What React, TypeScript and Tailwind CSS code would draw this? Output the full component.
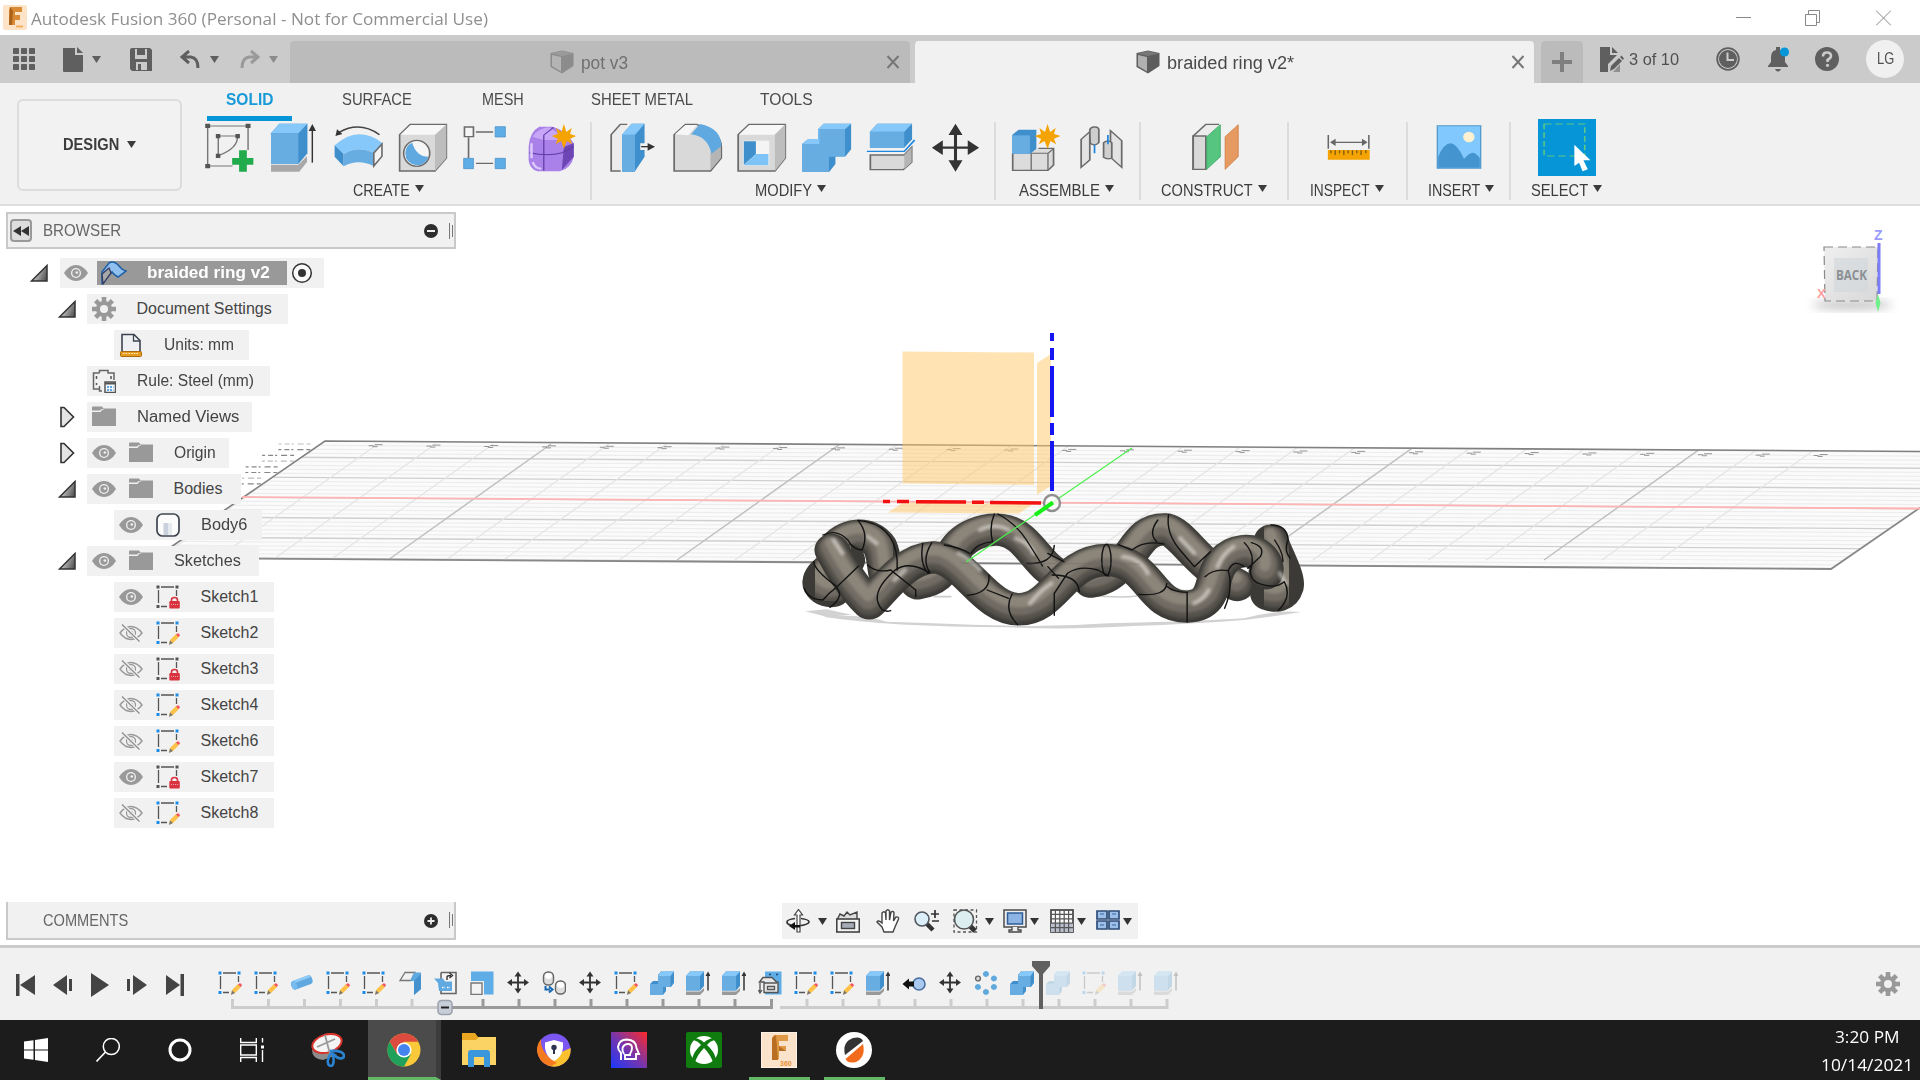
import { useLayoutEffect, useRef, useState, type ReactNode } from "react";

/* Single-line label condensed or expanded to a fixed width. */
function Fit({ w, className = "", children }: { w: number; className?: string; children: ReactNode }) {
  const ref = useRef<HTMLSpanElement>(null);
  const [s, setS] = useState(1);
  useLayoutEffect(() => {
    if (ref.current) setS(w / ref.current.offsetWidth);
  }, [w]);
  return (
    <span className={"block shrink-0 whitespace-nowrap " + className} style={{ width: w }}>
      <span ref={ref} className="inline-block origin-left whitespace-nowrap" style={{ transform: `scaleX(${s})` }}>
        {children}
      </span>
    </span>
  );
}

function Ic({ vb, className, children }: { vb: string; className: string; children: ReactNode }) {
  return (
    <svg viewBox={vb} preserveAspectRatio="none" className={"block shrink-0 " + className} fill="none">
      {children}
    </svg>
  );
}

function Caret({ className = "" }: { className?: string }) {
  return (
    <svg viewBox="0 0 10 8" preserveAspectRatio="none" className={"mr-px block h-[7px] w-[9px] shrink-0 " + className}>
      <path d="M0 0H10L5 8Z" fill="currentColor" />
    </svg>
  );
}

const DK = "#5f5f5f";

/* ---------- title + document tabs ---------- */

function TitleBar() {
  return (
    <div className="flex h-[35px] items-center bg-white font-['Open_Sans',sans-serif] text-[17px] leading-[24px] text-[#8f8f8f]">
      <Ic vb="0 0 24 25" className="ml-[3px] h-[25px] w-6">
        <rect width="24" height="25" rx="2" fill="#fde3c8" />
        <path d="M7 2H19V7H12V10H17V15H12V20H6V5Z" fill="#d98a34" />
        <path d="M7 2L6 20H9L10 6Z" fill="#a8621c" />
        <path d="M13 21.500H20" stroke="#f0b060" strokeWidth="2" />
      </Ic>
      <Fit w={457} className="ml-1 mt-0.5">Autodesk Fusion 360 (Personal - Not for Commercial Use)</Fit>
      <div className="ml-auto flex items-center pr-[29px]">
        <Ic vb="0 0 15 16" className="h-4 w-[15px]">
          <path d="M0 7.500H15" stroke="#888" />
        </Ic>
        <Ic vb="0 0 15 16" className="ml-[54px] h-4 w-[15px]">
          <path d="M0.500 4.500H11.500V15.500H0.500ZM3.500 4V0.500H14.500V12.500H12" stroke="#888" />
        </Ic>
        <Ic vb="0 0 15 16" className="ml-[56px] h-4 w-[15px]">
          <path d="M0 0.500L15 15.500M15 0.500L0 15.500" stroke="#888" />
        </Ic>
      </div>
    </div>
  );
}

function Cube({ a, b, c, className }: { a: string; b: string; c: string; className: string }) {
  return (
    <Ic vb="0 0 24 24" className={"h-6 w-6 " + className}>
      <path d="M0.500 3L12 0.500L23.500 3V16L12 23.500L0.500 17Z" fill={a} />
      <path d="M2 5L11 7V21.500L2 16Z" fill={b} />
      <path d="M1 3.500L12 1L23 3.500L12 6Z" fill={c} />
    </Ic>
  );
}

function CloseX({ className }: { className: string }) {
  return (
    <Ic vb="0 0 14 14" className={"h-3.5 w-3.5 " + className}>
      <path d="M1.500 1L12.500 13M12.500 1L1.500 13" stroke="#777" strokeWidth="2" />
    </Ic>
  );
}

function DocBar() {
  return (
    <div className="flex h-12 bg-[#cbcbcb]">
      <div className="flex h-12 w-[290px] shrink-0 items-center text-[#5f5f5f]">
        <Ic vb="0 0 22 22" className="ml-[13px] h-[22px] w-[22px]">
          {[0, 8, 16].map((x) => [0, 8, 16].map((y) => <rect key={x + "-" + y} x={x} y={y} width="6" height="6" rx="0.800" fill={DK} />))}
        </Ic>
        <Ic vb="0 0 20 25" className="ml-7 h-[25px] w-5">
          <path d="M0 1H12V8H20V24Q20 25 19 25H1Q0 25 0 24Z" fill={DK} />
          <path d="M14 0L20 6H14Z" fill={DK} />
        </Ic>
        <Caret className="ml-[9px]" />
        <Ic vb="0 0 22 23" className="ml-7 h-[23px] w-[22px]">
          <path d="M2 0H20L22 2V23H2L0 21V2Q0 0 2 0Z" fill={DK} />
          <path d="M5 1H17V11H5ZM6 14H17V22H6Z" fill="#cbcbcb" />
          <path d="M7 1H15V7H7ZM8 16H11V22H8Z" fill={DK} />
        </Ic>
        <Ic vb="0 0 20 19" className="ml-7 h-[19px] w-5">
          <path d="M9 1L2 7L9 13M2 7H11Q18 8 18 18" stroke={DK} strokeWidth="3" />
        </Ic>
        <Caret className="ml-[10px]" />
        <Ic vb="0 0 20 19" className="ml-5 h-[19px] w-5">
          <path d="M11 1L18 7L11 13M18 7H9Q2 8 2 18" stroke="#999" strokeWidth="3" />
        </Ic>
        <Caret className="ml-[9px] text-[#8c8c8c]" />
      </div>
      <div className="mt-1.5 flex h-[42px] w-[620px] shrink-0 items-center rounded-t bg-[#bbb] text-[18px] leading-[24px] text-[#707070]">
        <Cube a="#8c8c8c" b="#b4b4b4" c="#9a9a9a" className="ml-[260px]" />
        <Fit w={47} className="ml-[7px] mt-0.5">pot v3</Fit>
        <CloseX className="ml-auto mr-[10px]" />
      </div>
      <div className="ml-[5px] mt-1.5 flex h-[42px] w-[619px] shrink-0 items-center rounded-t bg-[#f1f1f1] text-[18px] leading-[24px] text-[#4a4a4a]">
        <Cube a="#5d5d5d" b="#b0b0b0" c="#777" className="ml-[221px]" />
        <Fit w={127} className="ml-[7px] mt-0.5">braided ring v2*</Fit>
        <CloseX className="ml-auto mr-[9px]" />
      </div>
      <div className="ml-[7px] mt-1.5 flex h-[42px] w-[42px] shrink-0 items-center justify-center rounded-t bg-[#bbb]">
        <Ic vb="0 0 20 20" className="h-5 w-5">
          <path d="M10 0V20M0 10H20" stroke="#7f7f7f" strokeWidth="4" />
        </Ic>
      </div>
      <div className="flex flex-1 items-center">
        <Ic vb="0 0 24 25" className="ml-[17px] h-[25px] w-6">
          <path d="M0 0H10V8H17L8 17V25H0Z" fill={DK} />
          <path d="M12 0L18 6H12Z" fill={DK} />
          <path d="M10 24L11 19L19 11L22 14L14 22Z" fill={DK} />
          <path d="M20 10L21.500 8.500L24 11.500L22.800 13Z" fill={DK} />
          <path d="M15 23L20 17V25H13Z" fill={DK} opacity=".55" />
        </Ic>
        <Fit w={50} className="ml-[5px] mt-0.5 text-[17px] leading-[24px] text-[#505050]">3 of 10</Fit>
        <Ic vb="0 0 24 24" className="ml-[37px] h-6 w-6">
          <circle cx="12" cy="12" r="10.800" stroke={DK} strokeWidth="1.800" />
          <circle cx="12" cy="12" r="9" fill={DK} />
          <path d="M11.500 5.500V13H18" stroke="#cbcbcb" strokeWidth="2" />
        </Ic>
        <Ic vb="0 0 22 26" className="ml-7 h-[26px] w-[22px]">
          <path d="M0 21V20L3 16V11Q3 5 8 4V1H12V4Q17 5 17 11V16L20 20V21Z" fill={DK} />
          <path d="M7 23H13Q12 25.500 10 25.500T7 23Z" fill={DK} />
          <circle cx="16.500" cy="6" r="4.600" fill="#0696d7" />
        </Ic>
        <Ic vb="0 0 24 24" className="ml-[25px] h-6 w-6">
          <circle cx="12" cy="12" r="12" fill={DK} />
          <path d="M8 9.500Q8 5.500 12 5.500T16 9Q16 11 12.500 13V15" stroke="#cbcbcb" strokeWidth="2.600" />
          <circle cx="12.500" cy="18.300" r="1.600" fill="#cbcbcb" />
        </Ic>
        <div className="ml-[27px] flex h-[38px] w-[38px] items-center justify-center rounded-full bg-[#f0f0f0] text-[16px] text-[#505050]">
          <Fit w={17}>LG</Fit>
        </div>
      </div>
    </div>
  );
}

/* ---------- ribbon ---------- */

const S = { stroke: "#6b6b6b", strokeWidth: 4 };

function Group({ pad, label, w, children, className }: { pad: string; label: string; w: number; children: ReactNode; className: string }) {
  return (
    <div className={"flex h-[78px] shrink-0 flex-col border-[#dcdcdc] " + className}>
      <div className="flex h-[59px] pt-px">{children}</div>
      <div className={"flex items-center text-[#3c3c3c] " + pad}>
        <Fit w={w} className="mt-px text-[16.5px] leading-[20px]">{label}</Fit>
        <Caret className="-mt-[3px] ml-[5px]" />
      </div>
    </div>
  );
}

function Star() {
  return <path d="M1380 372L1386 396L1399 384L1395 402L1410 408L1395 416L1400 433L1387 423L1380 446L1373 423L1360 433L1365 416L1350 408L1365 402L1361 384L1374 396Z" fill="#f4a300" />;
}

function Ribbon() {
  return (
    <div className="flex h-[123px] border-b-2 border-[#dedede] bg-[#f1f1f1]">
      <div className="ml-[17px] mt-4 flex h-[92px] w-[165px] shrink-0 items-center rounded-md border-2 border-[#dcdcdc] bg-[#f2f2f2] text-[#3c3c3c]">
        <Fit w={56} className="-mt-px ml-[44px] text-[16.5px] font-bold">DESIGN</Fit>
        <Caret className="-mt-px ml-2" />
      </div>
      <div className="ml-2 flex flex-col">
        <div className="flex h-[39px] text-[16.5px] leading-[33px] text-[#4a4a4a]">
          <div className="ml-[17px] flex h-[38px] w-[85px] justify-center border-b-[5px] border-[#0696d7] font-bold text-[#1899d8]">
            <Fit w={47}>SOLID</Fit>
          </div>
          <Fit w={70} className="ml-[50px]">SURFACE</Fit>
          <Fit w={42} className="ml-[70px]">MESH</Fit>
          <Fit w={102} className="ml-[67px]">SHEET METAL</Fit>
          <Fit w={53} className="ml-[67px]">TOOLS</Fit>
        </div>
        <div className="flex">
          <Group pad="pl-[163px]" label="CREATE" w={57} className="w-[402px] border-r-2">
            <Ic vb="500 369 125 150" className="ml-[14px] h-[50px] w-[51px]">
              <path d="M509 378H608V450M509 378V498H570" stroke="#777" strokeWidth="3.500" />
              <path d="M535 408H582Q584 445 535 467Z" stroke="#777" strokeWidth="3.500" />
              <path d="M503 371h12v13h-12zM602 371h12v13h-12zM503 492h12v13h-12zM529 402h11v13h-11zM577 402h11v13h-11zM529 461h11v13h-11z" fill="#555" />
              <path d="M586 451H605V474H621V494H605V515H586V494H569V474H586Z" fill="#22ab4d" />
            </Ic>
            <Ic vb="660 369 115 150" className="ml-[14px] h-[50px] w-[47px]">
              <path d="M665 494H732L753 468V486L734 515H665Z" fill="#a8a8a8" />
              <path d="M665 400L685 371H754V460L732 492H665Z" fill="#3f8fcd" />
              <path d="M665 400H732V492H665Z" fill="#68ade2" />
              <path d="M665 400L685 371H754L732 400Z" fill="#86c8fa" />
              <path d="M766 488V388" stroke="#333" strokeWidth="3.500" />
              <path d="M766 372L775 393H757Z" fill="#333" />
            </Ic>
            <Ic vb="815 369 125 150" className="ml-[17px] h-[50px] w-[51px]">
              <path d="M830 397Q880 362 929 404" stroke="#444" strokeWidth="4" />
              <path d="M821 408L825 388L838 402Z" fill="#333" />
              <path d="M819 436Q850 403 878 403Q910 403 937 430L914 458Q877 435 841 462Z" fill="#86c8fa" />
              <path d="M819 436L841 462V499L819 470Z" fill="#3f8fcd" />
              <path d="M841 462Q877 435 914 458V498Q877 475 841 499Z" fill="#68ade2" />
              <path d="M915 459L935 432V469L915 498Z" fill="#f4f4f4" {...S} />
            </Ic>
            <Ic vb="975 369 123 150" className="ml-[14px] h-[50px] w-[50px]">
              <path d="M979 404L1005 373H1094V474L1066 513H979Z" fill="#d9d9d9" {...S} />
              <path d="M1066 404L1094 373V474L1066 513Z" fill="#bdbdbd" />
              <path d="M981 404L1006 375H1092L1066 404Z" fill="#f7f7f7" />
              <ellipse cx="1021" cy="460" rx="32" ry="39" fill="#f5f5f5" {...S} />
              <path d="M1010 428Q1020 470 1050 470Q1042 496 1021 496Q993 490 993 458Q994 435 1010 428Z" fill="#5fa9e0" />
            </Ic>
            <Ic vb="1132 369 110 150" className="ml-[14px] h-[50px] w-[45px]">
              <path d="M1148 412V474M1166 396H1208M1166 490H1208" {...S} />
              <path d="M1138 381h22v29h-22z" fill="#f5f5f5" {...S} />
              <path d="M1213 380h25v31h-25zM1136 475h24v31h-24zM1213 475h25v31h-25z" fill="#5fade6" stroke="#4a90c8" strokeWidth="2" />
            </Ic>
            <Ic vb="1290 369 122 150" className="ml-5 h-[50px] w-[50px]">
              <path d="M1294 440Q1296 395 1320 380H1352Q1385 390 1404 430V470Q1398 505 1370 514H1316Q1296 508 1294 480Z" fill="#a981e8" />
              <path d="M1303 410Q1320 383 1345 382L1372 405L1376 420H1330Z" fill="#c7a6f8" />
              <path d="M1380 440L1404 430V470L1375 510Z" fill="#6d45b4" />
              <path d="M1296 458Q1340 470 1376 458L1404 440M1331 405V512M1331 405L1355 382" stroke="#5f3aa6" strokeWidth="3" />
              <path d="M1301 430V475M1304 486Q1308 505 1325 506" stroke="#dccbf9" strokeWidth="6" />
              <Star />
            </Ic>
          </Group>
          <Group pad="pl-[163px]" label="MODIFY" w={57} className="w-[404px] border-r-2">
            <Ic vb="66 369 106 150" className="ml-[17px] h-[50px] w-[46px]">
              <path d="M93 513H71V404L92 373H108" fill="#ececec" {...S} />
              <path d="M96 404L118 371H148V470L125 515H96Z" fill="#3f8fcd" />
              <path d="M96 404H126V515H96Z" fill="#68ade2" />
              <path d="M96 404L118 371H148L126 404Z" fill="#86c8fa" />
              <path d="M138 430L155 430V422L175 440L155 458V450H138Z" fill="#f1f1f1" />
              <path d="M140 440H162" stroke="#333" strokeWidth="4" />
              <path d="M172 440L155 429V452Z" fill="#333" />
            </Ic>
            <Ic vb="212 369 118 150" className="ml-[17px] h-[50px] w-[51px]">
              <path d="M217 404L243 373H268Q326 395 326 440V474L301 513H217Z" fill="#d9d9d9" {...S} />
              <path d="M301 460L325 436V474L301 511Z" fill="#b5b5b5" />
              <path d="M219 403L243 375H270L250 406Z" fill="#f7f7f7" />
              <path d="M256 403L277 372Q326 385 326 438L303 462Q296 410 256 403Z" fill="#5fa9e0" />
            </Ic>
            <Ic vb="360 369 118 150" className="ml-[13px] h-[50px] w-[51px]">
              <path d="M365 404L390 373H474V474L450 513H365Z" fill="#d9d9d9" {...S} />
              <path d="M450 404L474 373V474L450 513Z" fill="#bdbdbd" />
              <path d="M367 404L391 375H472L449 404Z" fill="#f7f7f7" />
              <path d="M376 422H437V497H376Z" fill="#f4f4f4" />
              <path d="M378 424H406V462L378 495Z" fill="#3f8fcd" />
              <path d="M406 462H435V496H378Z" fill="#7ec3f6" />
            </Ic>
            <Ic vb="510 369 117 150" className="ml-[14px] h-[50px] w-[51px]">
              <path d="M513 431L527 417H549V388L562 371H625V448L612 469H589V492L575 515H513Z" fill="#3f8fcd" />
              <path d="M513 433H550V388H611V470H574V515H513Z" fill="#68ade2" />
              <path d="M513 433L527 417H550V388L562 371H625L611 388H552V433Z" fill="#86c8fa" />
            </Ic>
            <Ic vb="660 369 115 150" className="ml-[14px] h-[50px] w-[50px]">
              <path d="M669 395L686 371H766V418L748 443H669Z" fill="#3f8fcd" />
              <path d="M669 395H748V443H669Z" fill="#68ade2" />
              <path d="M669 395L686 371H766L748 395Z" fill="#86c8fa" />
              <path d="M662 454H748L772 420" stroke="#1e86e0" strokeWidth="4" />
              <path d="M670 465H748L765 442V487L746 509H670Z" fill="#d9d9d9" {...S} />
              <path d="M748 465L765 442V487L748 507Z" fill="#b5b5b5" />
            </Ic>
            <Ic vb="810 369 112 150" className="ml-[15px] h-[50px] w-[49px]">
              <path d="M866 390V495M830 443H902" stroke="#333" strokeWidth="7" />
              <path d="M866 371L882 405H850ZM866 515L882 481H850ZM812 443L837 421V465ZM920 443L894 421V465Z" fill="#333" />
            </Ic>
          </Group>
          <Group pad="pl-[23px]" label="ASSEMBLE" w={81} className="w-[145px] border-r-2">
            <Ic vb="994 369 114 150" className="ml-[15px] h-[50px] w-[49px]">
              <path d="M998 460V511H1080L1093 495V445H1058" fill="#dcdcdc" {...S} />
              <path d="M1041 460V511M1041 460H1080V510M1080 460L1093 446" stroke="#6b6b6b" strokeWidth="3" />
              <path d="M997 404L1012 389H1053V446L1039 461H997Z" fill="#3f8fcd" />
              <path d="M997 406H1038V461H997Z" fill="#68ade2" />
              <g transform="translate(-301 0)"><Star /></g>
            </Ic>
            <Ic vb="1150 369 102 150" className="ml-[19px] h-[50px] w-[44px]">
              <path d="M1155 418L1175 395V480L1155 502Z" fill="#e3e3e3" {...S} />
              <path d="M1175 390Q1177 380 1187 381T1196 390V428Q1186 440 1176 430Z" fill="#cfcfcf" {...S} />
              <path d="M1223 392L1249 422V502L1223 472Z" fill="#e3e3e3" {...S} />
              <path d="M1207 428Q1217 418 1226 428V474Q1216 480 1207 472Z" fill="#cfcfcf" {...S} />
              <path d="M1186 434V460M1217 405V433" stroke="#1e86e0" strokeWidth="4" />
            </Ic>
          </Group>
          <Group pad="pl-[20px]" label="CONSTRUCT" w={92} className="w-[148px] border-r-2">
            <Ic vb="1408 369 112 150" className="ml-[50px] h-[50px] w-[49px]">
              <path d="M1442 508H1413V408L1442 373H1472" fill="#ececec" {...S} />
              <path d="M1413 408H1442V508H1413Z" fill="#d9d9d9" {...S} />
              <path d="M1444 410L1475 374V470L1444 508Z" fill="#55c57f" stroke="#35a562" strokeWidth="2" />
              <path d="M1486 410L1516 374V470L1486 508Z" fill="#e69a62" stroke="#cf7c40" strokeWidth="2" />
            </Ic>
          </Group>
          <Group pad="pl-[21px]" label="INSPECT" w={60} className="w-[119px] border-r-2">
            <Ic vb="200 369 102 150" className="ml-[38px] h-[50px] w-[44px]">
              <path d="M203 405V446M297 405V446M210 427H290" stroke="#666" strokeWidth="3.500" />
              <path d="M207 427L220 416V438ZM294 427L281 416V438Z" fill="#666" />
              <path d="M202 450H299V479H202Z" fill="#f4a300" />
              <path d="M209 451V460M219 451V465M229 451V460M239 451V465M249 451V460M259 451V465M269 451V460M279 451V465M290 451V460" stroke="#7d5a10" strokeWidth="3" />
            </Ic>
          </Group>
          <Group pad="pl-[20px]" label="INSERT" w={52} className="w-[103px] border-r-2">
            <Ic vb="452 369 105 150" className="ml-7 h-[50px] w-[46px]">
              <path d="M455 377H554V505H455Z" fill="#80c8fd" stroke="#5599cc" strokeWidth="3" />
              <ellipse cx="527" cy="411" rx="13" ry="16" fill="#fdf1d2" />
              <path d="M457 470Q470 430 486 430Q500 432 516 476Q528 458 536 458Q545 460 552 474V503H457Z" fill="#4394cf" />
            </Ic>
          </Group>
          <Group pad="pl-[20px]" label="SELECT" w={57} className="w-[100px]">
            <Ic vb="688 357 134 171" className="-mt-1 ml-[27px] h-[57px] w-[58px]">
              <path d="M688 357H822V528H688Z" fill="#0696d7" />
              <path d="M702 372H796V468H702Z" stroke="#5fc882" strokeWidth="3.500" strokeDasharray="17 9" />
              <path d="M772 434L809 481H793L803 508L791 514L783 488L772 498Z" fill="#fff" />
            </Ic>
          </Group>
        </div>
      </div>
    </div>
  );
}

/* ---------- small icons shared by tree and timeline ---------- */

type Kind =
  | "sketch" | "locked" | "cyl" | "flange" | "insert" | "scale" | "move" | "joint" | "combine"
  | "extrude" | "derive" | "press" | "pattern" | "folder" | "gear" | "units" | "rule" | "body";

function Small({ kind, faded = false, className = "" }: { kind: Kind; faded?: boolean; className?: string }) {
  return (
    <svg viewBox="0 0 24 24" fill="none" className={"block h-6 w-6 shrink-0 " + (faded ? "opacity-25 " : "") + className}>
      {(kind === "sketch" || kind === "locked") && (
        <>
          <path d="M5 2H18M2.500 5V18M20.500 5V11M5 21.500H11" stroke="#555" strokeWidth="1.300" />
          <path d="M0.500 0.500h3v3h-3zM19.500 0.500h3v3h-3zM0.500 20h3v3h-3z" fill={kind === "sketch" ? "#1d8be8" : "#555"} />
        </>
      )}
      {kind === "sketch" && (
        <>
          <path d="M14 19L20 13L23 16L17 22L13 23.500Z" fill="#fcc24a" />
          <path d="M14 19.500L17 22L13 24Z" fill="#777" />
          <path d="M20 13.500L21.500 12.200Q23.500 12.200 24 14.500L22.500 16Z" fill="#f4525c" />
        </>
      )}
      {kind === "locked" && (
        <>
          <path d="M15.500 17V15Q15.500 12.500 18.500 12.500T21.500 15V17" stroke="#d8333f" strokeWidth="1.600" />
          <rect x="13.300" y="16" width="10.500" height="7.600" rx="1" fill="#d8333f" />
          <path d="M15 19.500H22" stroke="#f3a1a6" strokeWidth="1.200" strokeDasharray="1 1" />
        </>
      )}
      {kind === "cyl" && (
        <g transform="rotate(-20 12 12)">
          <path d="M4 7H20Q23 7 23 11.500T20 16H4Q1 16 1 11.500T4 7Z" fill="#5fa9e0" />
          <path d="M4 7H20Q22 7 22.500 9.500H3Z" fill="#8fcbf7" />
          <ellipse cx="4" cy="11.500" rx="2.600" ry="4.500" fill="#78bbee" />
        </g>
      )}
      {kind === "flange" && (
        <>
          <path d="M7 1.500H17L13 9.500H2Z" fill="#f1f1f1" stroke="#777" strokeWidth="1.300" />
          <path d="M16 1.500H23V18L16 24V10H12Z" fill="#5fa9e0" />
          <path d="M16 10L23 3V18L16 24Z" fill="#4391cf" />
        </>
      )}
      {kind === "insert" && (
        <>
          <path d="M7 1.500H22V22.500H7V1.500" fill="#f4f4f4" stroke="#666" strokeWidth="1.600" />
          <path d="M0 7.500H9L11 10.500H18V20H5L4 12Z" fill="#5fa9e0" />
          <path d="M8 16.500H11M13 16.500H16" stroke="#fff" strokeWidth="1.500" strokeDasharray="1.500 1" />
          <path d="M13 9V6Q13 4.500 17 4.500M15.500 2L18.500 4.500L15.500 7" stroke="#333" strokeWidth="1.400" />
        </>
      )}
      {kind === "scale" && (
        <>
          <path d="M1 0.500H23.500V23.500H14V10H1Z" fill="#5fade6" />
          <path d="M1 12H12V23.500H1Z" fill="#f4f4f4" stroke="#777" strokeWidth="1.400" />
        </>
      )}
      {kind === "move" && (
        <>
          <path d="M12 4V19M4 11.500H20" stroke="#333" strokeWidth="1.800" />
          <path d="M12 0.500L15.500 5.500H8.500ZM12 22.500L15.500 17.500H8.500ZM1 11.500L6 8V15ZM23 11.500L18 8V15Z" fill="#333" />
        </>
      )}
      {kind === "joint" && (
        <>
          <rect x="1.500" y="1" width="10" height="13" rx="4.500" fill="#ddd" stroke="#666" strokeWidth="1.400" />
          <rect x="13.500" y="10" width="10" height="13" rx="4.500" fill="#ddd" stroke="#666" strokeWidth="1.400" />
          <ellipse cx="6.500" cy="5" rx="3.500" ry="3" fill="#fff" />
          <ellipse cx="18.500" cy="14" rx="3.500" ry="3" fill="#fff" />
          <path d="M3.500 15V18.500H8M7 15.500L10.500 18.500L7 21.500" stroke="#1468b3" strokeWidth="2" />
        </>
      )}
      {kind === "combine" && (
        <>
          <path d="M0 13L3 10H8V4L11 0.500H24V12L21 16H16V20L13 24H0Z" fill="#3f8fcd" />
          <path d="M0 13H8V5H20.500V16H13V24H0Z" fill="#68ade2" />
          <path d="M8 5L11 0.500H24L20.500 5Z" fill="#86c8fa" />
        </>
      )}
      {kind === "extrude" && (
        <>
          <path d="M0 20.500H14L18 17V20L14 24H0Z" fill="#999" />
          <path d="M0 5L4 0.500H18V15L14 19.500H0Z" fill="#3f8fcd" />
          <path d="M0 5H14V19.500H0Z" fill="#68ade2" />
          <path d="M0 5L4 0.500H18L14 5Z" fill="#86c8fa" />
          <path d="M22 19.500V3" stroke="#333" strokeWidth="1.500" />
          <path d="M22 0.500L24.500 5H19.500Z" fill="#333" />
        </>
      )}
      {kind === "derive" && (
        <>
          <path d="M7 0.500H23.500V23.500H7Z" fill="#5fade6" />
          <path d="M1.500 11L5 6.500H14L18.500 11H20V21.500H6V11Z" fill="#e8e8e8" stroke="#555" strokeWidth="1.400" />
          <path d="M6 12H19M9.500 15.500H16.500V18.500H9.500ZM2 12V21M0.500 19L2 22L4 19" stroke="#555" strokeWidth="1.300" />
          <path d="M11 3.500H13M18 3.500H20" stroke="#246" strokeWidth="1.300" />
        </>
      )}
      {kind === "press" && (
        <>
          <circle cx="17" cy="13" r="6" fill="#a9c9f0" stroke="#4b6f9e" strokeWidth="1.600" />
          <path d="M0.500 13L7 7.500V10.500H12V15.500H7V18.500Z" fill="#111" />
        </>
      )}
      {kind === "pattern" && (
        <>
          <path d="M12 0a3 3 0 1 1-.1 0zM20 4.500a3 3 0 1 1-.1 0zM20 13a3 3 0 1 1-.1 0zM12 18a3 3 0 1 1-.1 0zM4 13a3 3 0 1 1-.1 0z" fill="#5fa9dc" />
          <circle cx="4" cy="7.500" r="2.400" fill="#ddd" stroke="#666" strokeWidth="1.400" />
        </>
      )}
      {kind === "folder" && <path d="M0 2.500Q0 1.500 1 1.500H10L12 4H9.500L8 5.500H0ZM0 7H8.500L10.500 4.500H12V3.500H24V21H0Z" fill="#999" />}
      {kind === "gear" && (
        <>
          <g stroke="#999" strokeWidth="4.600">
            <path d="M12 0V24M0 12H24M3.600 3.600L20.400 20.400M20.400 3.600L3.600 20.400" />
          </g>
          <circle cx="12" cy="12" r="8" fill="#999" />
          <circle cx="12" cy="12" r="4" fill="#f1f1f1" />
        </>
      )}
      {kind === "units" && (
        <>
          <path d="M3 19V1.500H15L21 7.500V19Z" fill="#eef0f3" stroke="#3c4350" strokeWidth="1.600" />
          <path d="M14.500 1.500V8H21" stroke="#3c4350" strokeWidth="1.300" />
          <rect x="1.500" y="18.500" width="21" height="5" rx="1" fill="#e89a1c" stroke="#a96a12" />
          <path d="M4 20.500H20" stroke="#fff3d0" strokeDasharray="1.500 1.200" />
        </>
      )}
      {kind === "rule" && (
        <>
          <path d="M7.500 4H1.500V20H7.500M7.500 4V1.500H16V4H22V11M7.500 17V22H10" stroke="#666" strokeWidth="1.500" />
          <path d="M4.500 7V10M4.500 14V16M19 7V10" stroke="#555" strokeWidth="1.500" />
          <rect x="13" y="13" width="10.500" height="10.500" fill="#f8f8f8" stroke="#555" strokeWidth="1.500" />
          <path d="M13 14.500H23" stroke="#555" strokeWidth="2" />
          <path d="M15 18H21.500M15 21H21.500" stroke="#2b8be0" strokeWidth="1.400" strokeDasharray="2 1" />
        </>
      )}
      {kind === "body" && (
        <>
          <rect x="1" y="1" width="22" height="22" rx="5.500" fill="#fcfcfc" stroke="#3f4650" strokeWidth="1.700" />
          <path d="M7.500 10H12.500V22H7.500Z" fill="#c9d2dc" />
          <path d="M12.500 10H16V22H12.500Z" fill="#e6eaef" />
        </>
      )}
    </svg>
  );
}

function Eye({ off = false, className = "" }: { off?: boolean; className?: string }) {
  return (
    <svg viewBox="0 0 24 18" fill="none" className={"block h-[18px] w-6 shrink-0 " + className}>
      {off ? (
        <>
          <path d="M1 9Q6 2.500 12 2.500T23 9Q18 15.500 12 15.500T1 9Z" stroke="#999" strokeWidth="1.400" />
          <circle cx="12" cy="9" r="4.500" stroke="#999" strokeWidth="1.300" />
          <circle cx="12" cy="9" r="1.800" stroke="#999" />
          <path d="M3.500 0.500L20.500 17.500" stroke="#f1f1f1" strokeWidth="3.500" />
          <path d="M3 0.500L20.500 17.500" stroke="#888" strokeWidth="1.100" />
        </>
      ) : (
        <>
          <path d="M0 9Q5 1 12 1T24 9Q19 17 12 17T0 9Z" fill="#999" />
          <circle cx="12" cy="9" r="5" fill="#f1f1f1" />
          <circle cx="12" cy="9" r="3.700" fill="#999" />
          <circle cx="12.800" cy="8.500" r="1.300" fill="#f1f1f1" />
        </>
      )}
    </svg>
  );
}

function Twisty({ open }: { open: boolean }) {
  return open ? (
    <svg viewBox="0 0 18 18" className="block h-[18px] w-[18px] shrink-0">
      <defs>
        <linearGradient id="tw" x1="0" y1="0.300" x2="1" y2="0.700">
          <stop offset="0" stopColor="#eee" />
          <stop offset="1" stopColor="#555" />
        </linearGradient>
      </defs>
      <path d="M1.500 17L17 1.500V17Z" fill="url(#tw)" stroke="#333" strokeWidth="1.500" />
    </svg>
  ) : (
    <svg viewBox="0 0 18 22" className="block h-[22px] w-[18px] shrink-0">
      <path d="M3 1.500H6L15.500 11L6 20.500H3Z" fill="#e4e4e4" stroke="#333" strokeWidth="1.600" />
    </svg>
  );
}

/* ---------- browser tree ---------- */

type Row = { lvl: 1 | 2; open?: boolean; eye?: "on" | "off"; kind: Kind; label: string; w: number; box: string };

const ROWS: Row[] = [
  { lvl: 1, open: true, kind: "gear", label: "Document Settings", w: 135, box: "w-[201px]" },
  { lvl: 2, kind: "units", label: "Units: mm", w: 70, box: "w-[135px]" },
  { lvl: 1, kind: "rule", label: "Rule: Steel (mm)", w: 117, box: "w-[183px]" },
  { lvl: 1, open: false, kind: "folder", label: "Named Views", w: 102, box: "w-[165px]" },
  { lvl: 1, open: false, eye: "on", kind: "folder", label: "Origin", w: 42, box: "w-[142px]" },
  { lvl: 1, open: true, eye: "on", kind: "folder", label: "Bodies", w: 49, box: "w-[154px]" },
  { lvl: 2, eye: "on", kind: "body", label: "Body6", w: 46, box: "w-[148px]" },
  { lvl: 1, open: true, eye: "on", kind: "folder", label: "Sketches", w: 67, box: "w-[172px]" },
  { lvl: 2, eye: "on", kind: "locked", label: "Sketch1", w: 58, box: "w-[160px]" },
  { lvl: 2, eye: "off", kind: "sketch", label: "Sketch2", w: 58, box: "w-[160px]" },
  { lvl: 2, eye: "off", kind: "locked", label: "Sketch3", w: 58, box: "w-[160px]" },
  { lvl: 2, eye: "off", kind: "sketch", label: "Sketch4", w: 58, box: "w-[160px]" },
  { lvl: 2, eye: "off", kind: "sketch", label: "Sketch6", w: 58, box: "w-[160px]" },
  { lvl: 2, eye: "on", kind: "locked", label: "Sketch7", w: 58, box: "w-[160px]" },
  { lvl: 2, eye: "off", kind: "sketch", label: "Sketch8", w: 58, box: "w-[160px]" },
];

function Grip() {
  return (
    <div className="ml-[10px] flex gap-[2px]">
      <div className="h-4 w-px bg-[#777]" />
      <div className="mt-0.5 h-3 w-px bg-[#777]" />
    </div>
  );
}

function Browser() {
  return (
    <div>
      <div className="ml-1.5 mt-1.5 flex h-[37px] w-[450px] items-center border-2 border-[#c9c9c9] bg-[#f1f1f1]">
        <div className="ml-[2px] flex h-[23px] w-[22px] items-center justify-center rounded-sm border-2 border-[#999] bg-[#dedede]">
          <svg viewBox="0 0 16 10" className="h-2.5 w-4 shrink-0"><path d="M8 0V10L0 5ZM16 0V10L8 5Z" fill="#333" /></svg>
        </div>
        <Fit w={78} className="-mt-0.5 ml-[11px] text-[16.5px] leading-[24px] text-[#666]">BROWSER</Fit>
        <svg viewBox="0 0 14 14" className="ml-auto h-3.5 w-3.5"><circle cx="7" cy="7" r="7" fill="#2d2d2d" /><path d="M3 7H11" stroke="#eee" strokeWidth="2" /></svg>
        <div className="pl-px pr-[1px]"><Grip /></div>
      </div>
      <div className="mt-[9px] flex flex-col gap-1.5 text-[16px] leading-[24px] text-[#444]">
        <div className="flex h-[30px] items-center">
          <div className="flex w-[60px] pl-[30px]"><Twisty open /></div>
          <div className="flex h-[30px] w-[264px] items-center bg-[#f1f1f1]">
            <Eye className="ml-1" />
            <div className="ml-[9px] flex h-6 w-[190px] items-center bg-[#999]">
              <svg viewBox="0 0 26 24" className="ml-1 h-6 w-[26px]">
                <path d="M1 11L8 2Q13 -1 18 5Q21 9 25 10L17 16Q13 14 11 11L1 22Z" fill="#8fc0ee" stroke="#1f5ea8" strokeWidth="1.500" />
                <path d="M1 13L8 7L10 12L2 23Z" fill="#a8a8a8" stroke="#333b60" strokeWidth="1.300" />
              </svg>
              <Fit w={123} className="ml-5 font-bold text-white">braided ring v2</Fit>
            </div>
            <svg viewBox="0 0 22 22" className="ml-1 h-[22px] w-[22px]"><circle cx="11" cy="11" r="9.300" fill="#fafafa" stroke="#333" strokeWidth="1.500" /><circle cx="11" cy="11" r="4" fill="#333" /></svg>
          </div>
        </div>
        {ROWS.map((r) => (
          <div key={r.label} className="flex h-[30px] items-center">
            <div className={"flex shrink-0 pl-[58px] " + (r.lvl === 1 ? "w-[87px]" : "w-[114px]")}>{r.open !== undefined && <Twisty open={r.open} />}</div>
            <div className={"flex h-[30px] items-center bg-[#f1f1f1] pl-[4.5px] " + r.box}>
              {r.eye && <Eye off={r.eye === "off"} className="mr-[13px]" />}
              <Small kind={r.kind} />
              <Fit w={r.w} className="ml-[21px]">{r.label}</Fit>
            </div>
          </div>
        ))}
      </div>
    </div>
  );
}

/* ---------- 3D canvas ---------- */

const FRONT_LEFT = "M145 690C165 730 200 800 250 850C290 810 350 715 430 712C520 715 570 868 670 868C770 868 790 722 915 720C1040 722 1030 860 1140 860C1230 855 1200 770 1240 725C1270 690 1320 680 1350 715C1365 735 1362 755 1360 760";
const TUBES = [
  "M150 690C180 640 250 630 280 680C295 715 290 750 300 775",
  "M190 720C130 740 100 780 115 798C125 812 140 815 150 812",
  "M385 790C440 780 450 760 480 710C510 640 580 625 620 630C700 640 720 750 800 775",
  "M870 785C910 780 930 760 950 740C1000 690 1010 625 1080 628C1130 640 1170 740 1280 795",
  "M1375 662C1385 700 1425 770 1418 800C1410 828 1390 832 1365 822",
  FRONT_LEFT,
];

function Tube({ d }: { d: string }) {
  return (
    <g fill="none" strokeLinecap="round" strokeLinejoin="round">
      <path d={d} stroke="#3b3a36" strokeWidth="97" />
      <g filter="url(#shade)">
        <path d={d} stroke="#54514b" strokeWidth="80" transform="translate(-1 -4)" />
        <path d={d} stroke="#716c63" strokeWidth="60" transform="translate(-2 -12)" />
        <path d={d} stroke="#8b857a" strokeWidth="32" transform="translate(-3 -22)" />
      </g>
    </g>
  );
}

function Scene() {
  const yAt = (base: number, x: number) => base + 0.0068 * (x - 245);
  const rows = Array.from({ length: 30 }, (_, i) => i - 14);
  const cols = Array.from({ length: 27 }, (_, i) => i - 3);
  const leftX = (y: number) => 325 - 1.45 * (y - 441);
  return (
    <svg viewBox="0 206 1920 739" className="absolute inset-0 h-[739px] w-[1920px]">
      <defs>
        <filter id="soft" x="-10%" y="-30%" width="120%" height="160%"><feGaussianBlur stdDeviation="5" /></filter>
        <filter id="shade" x="-10%" y="-30%" width="120%" height="160%"><feGaussianBlur stdDeviation="4.500" /></filter>
        <linearGradient id="cube" x1="0" y1="0" x2="1" y2="1"><stop offset="0" stopColor="#efefef" /><stop offset="1" stopColor="#d8d8d8" /></linearGradient>
        <clipPath id="plane"><path d="M325 441L2001 452L1831 569L155 558Z" /></clipPath>
      </defs>
      <path d="M325 441L2001 452L1831 569L155 558Z" fill="#fbfbfb" />
      <g clipPath="url(#plane)">
        {rows.map((k) => {
          const b = 497.3 + 4.04 * k;
          return <path key={k} d={`M100 ${yAt(b, 100)}L2010 ${yAt(b, 2010)}`} stroke={k % 5 === 0 ? "#cfcfcf" : "#ededed"} strokeWidth={k % 5 === 0 ? 1.4 : 1.2} />;
        })}
        {cols.filter((k) => k !== 11).map((k) => {
          const x = 551 + 57.8 * (k - 1);
          const major = (k - 1) % 5 === 0;
          return <path key={k} d={`M${x} 444L${x - 163} 560`} stroke={major ? "#c0c0c0" : "#e4e4e4"} strokeWidth={major ? 1.5 : 1.2} />;
        })}
      </g>
      {cols.slice(1).map((k) => {
        const x = 551 + 57.8 * (k - 1);
        return <path key={k} d={`M${x - 9} ${yAt(444.8, x)}h5m1 -1h8m-10 2h5`} stroke="#8a8a8a" strokeWidth="0.900" />;
      })}
      {Array.from({ length: 10 }, (_, i) => {
        const y = 444 + i * 5.7 + (i > 7 ? 6 : 0);
        return <path key={i} d={`M${leftX(y) - 42 + (i % 2) * 8} ${y}h3m3 0h5m2 0h2m4 0h6m3 0h4`} stroke="#7a7a7a" strokeWidth="1.200" opacity={i % 3 === 0 ? 0.5 : 0.9} />;
      })}
      <path d="M2001 452L325 441L155 558" fill="none" stroke="#808080" strokeWidth="1.600" />
      <path d="M155 558L1831 569L2001 452" fill="none" stroke="#888" strokeWidth="1.800" />
      <path d="M242 497L1920 508.500" stroke="#ffb3b3" strokeWidth="1.800" />
      <g fill="#ffc766" fillOpacity="0.500">
        <path d="M902.500 351.500L1034 352.500V485L902.500 483.500Z" />
        <path d="M1037 363L1051 354V486L1037 494.500Z" />
        <path d="M903 502.500L1033 504L1019 513.500L888 512.500Z" />
      </g>
      <g transform="translate(780 320) scale(0.35714 0.33333)">
        <path d="M70 874L130 868L200 884L130 890ZM120 890Q220 880 300 905Q480 912 600 916Q760 922 920 910Q1150 905 1300 895Q1380 870 1460 876Q1380 890 1300 900Q1150 912 990 918Q800 930 640 922Q300 920 120 890Z" fill="#d2d2d2" />
        <path d="M430 830H480M860 825Q950 835 1000 828" fill="none" stroke="#ccc" strokeWidth="5" />
        {TUBES.map((d) => <Tube key={d} d={d} />)}
        <g fill="none" stroke="#f2efe9" strokeLinecap="round" opacity="0.550" filter="url(#soft)">
          <path d="M560 630Q600 608 640 630M500 700Q530 715 560 750M700 850Q730 810 760 790M960 710Q1010 715 1030 760M1160 850Q1190 835 1200 810M1120 655L1160 700M320 780L350 750M660 655Q700 670 710 700M245 650L270 670M150 660L175 700M1225 740Q1240 700 1270 680M1400 760L1415 790" strokeWidth="12" />
        </g>
        <g fill="none" stroke="#131313" strokeWidth="4" strokeLinecap="round">
          <path d="M218 601Q250 640 230 690M218 601Q320 610 328 720V750M120 645Q160 625 190 660Q205 690 230 690M95 725Q95 750 160 800L220 738M68 805Q80 840 120 840Q135 820 160 800" />
          <path d="M160 805Q180 830 140 862M245 735Q270 760 310 750L380 810V830M400 670Q390 730 415 760M425 668Q395 720 420 758M320 752Q360 720 418 758M320 752Q260 810 275 850Q285 880 310 872" />
          <path d="M600 582Q585 620 595 665M610 582Q660 610 690 660T735 738M530 700Q500 680 460 675M595 665Q550 670 535 700M768 676Q765 735 690 730M750 700L795 725" />
          <path d="M585 765Q590 820 525 826M580 810L640 835M650 822Q625 870 665 914M768 886V820L805 760Q840 735 890 750L920 768M762 765Q835 765 838 815M750 740L780 775" />
          <ellipse cx="914" cy="720" rx="13" ry="47" />
          <path d="M1058 600Q1030 640 1055 665M1088 584Q1080 640 1120 690L1160 740M948 674L985 690Q1020 660 1075 672M1160 740L1205 695M1083 790Q1080 830 1005 823M1085 800Q1100 815 1140 817V906" />
          <path d="M1190 770Q1215 745 1255 752Q1270 800 1245 865M1255 752Q1270 715 1300 740M1300 668Q1330 700 1320 740Q1310 770 1335 788Q1385 810 1412 785M1320 668Q1360 680 1345 710L1310 745M1385 660Q1410 700 1408 725M1412 785Q1435 830 1395 872M1375 615Q1420 615 1423 660Q1410 690 1428 714" />
        </g>
      </g>
      <path d="M1132 448L966 562" stroke="#4cf04c" strokeWidth="1.200" />
      <path d="M960 563L1140 564" stroke="#666" strokeOpacity="0.350" />
      <path d="M1052 333V341M1052 348V360M1052 366V417M1052 423V435M1052 441V491" stroke="#1616f2" strokeWidth="4" />
      <path d="M883 501.500H890M897 501.500H909M916 501.800L966 502M972 502.200H984M990 502.500L1041 503" stroke="#f21010" strokeWidth="3.600" />
      <circle cx="1052" cy="503" r="8" fill="#fff" fillOpacity="0.700" stroke="#8f8f8f" strokeWidth="2.400" />
      <path d="M1053 502.500L1035 515" stroke="#16f016" strokeWidth="4" />

      <ellipse cx="1852" cy="305" rx="40" ry="4.500" fill="#999" opacity="0.600" filter="url(#soft)" />
      <path d="M1824 247H1878L1877 301H1825Z" fill="url(#cube)" stroke="#8a8a8a" strokeWidth="1.200" strokeDasharray="9 5" />
      <rect x="1834" y="258" width="34" height="34" fill="#d3d8dc" opacity="0.700" />
      <text x="1836" y="279.500" textLength="31" lengthAdjust="spacingAndGlyphs" className="font-['Open_Sans',sans-serif] text-[14px] font-bold" fill="#8b8f93">BACK</text>
      <path d="M1879 243V294" stroke="#7d7dfa" strokeWidth="3" />
      <path d="M1878 294L1880.500 303L1878 312L1875.500 303Z" fill="#6ff08a" />
      <text x="1874" y="240" className="font-['Liberation_Sans',sans-serif] text-[14px] font-bold" fill="#9a9aff">Z</text>
      <text x="1817" y="298" className="font-['Liberation_Sans',sans-serif] text-[13px] font-bold" fill="#ffa0a0">X</text>
    </svg>
  );
}

function Comments() {
  return (
    <div className="ml-1.5 flex h-[38px] w-[450px] items-center border-2 border-t-0 border-[#c9c9c9] bg-[#f1f1f1]">
      <Fit w={85} className="ml-[35px] text-[16.5px] leading-[24px] text-[#666]">COMMENTS</Fit>
      <svg viewBox="0 0 14 14" className="ml-auto mt-px h-3.5 w-3.5"><circle cx="7" cy="7" r="7" fill="#2d2d2d" /><path d="M3.500 7H10.500M7 3.500V10.500" stroke="#eee" strokeWidth="1.800" /></svg>
      <div className="pl-px pr-[1px]"><Grip /></div>
    </div>
  );
}

function NavBar() {
  return (
    <div className="ml-[326px] flex h-9 w-[356px] items-center bg-[#f1f1f1] text-[#333]">
      <Ic vb="0 0 24 24" className="ml-1 h-6 w-6">
        <path d="M15 9.500Q23 10.500 23 13T12 17M9 9.500Q1 10.500 1 13T5 16" stroke="#333" strokeWidth="1.700" />
        <path d="M11 23V6H8.500L12.500 0.500L16.500 6H14V23Z" fill="#fff" stroke="#444" strokeWidth="1.200" />
        <path d="M3 17L9 13V16H14V18.500H9V21Z" fill="#111" />
      </Ic>
      <Caret className="ml-2" />
      <Ic vb="0 0 24 24" className="ml-2 h-6 w-6">
        <path d="M1 11L4 5L8 7L11 3L14 6L21 3V11" fill="#ddd" stroke="#444" strokeWidth="1.400" />
        <rect x="0.800" y="10" width="22.500" height="13" fill="#f4f4f4" stroke="#444" strokeWidth="1.600" />
        <rect x="5.500" y="13.500" width="13" height="6" fill="#a6acb8" stroke="#444" strokeWidth="1.400" />
      </Ic>
      <Ic vb="0 0 24 24" className="ml-[16px] h-6 w-6">
        <path d="M8 23L6 18L1 13Q2 10.500 6 14V4Q8 1.500 9.500 4L10 11V2Q12 -0.500 13.500 2V11L15 3Q17.500 1.500 18 4L17.500 12L20 8Q23 7.500 22.500 10L19 18L17 23Z" fill="#fff" stroke="#444" strokeWidth="1.400" />
      </Ic>
      <Ic vb="0 0 26 24" className="ml-[14px] h-6 w-[26px]">
        <path d="M13 15L19 21" stroke="#333" strokeWidth="4.500" />
        <circle cx="8" cy="10" r="7" fill="#dceefa" stroke="#50565e" strokeWidth="1.600" />
        <path d="M17 5H25M21 1V9M18 12H25" stroke="#333" strokeWidth="1.700" />
      </Ic>
      <Ic vb="0 0 25 24" className="ml-[13px] h-6 w-[25px]">
        <path d="M1 1H23.500V23H1Z" stroke="#555" strokeWidth="1.300" strokeDasharray="3 2.500" />
        <path d="M16 16L22 22" stroke="#333" strokeWidth="5" />
        <circle cx="11" cy="10.500" r="9.500" fill="#dceeef" stroke="#555" strokeWidth="1.600" />
      </Ic>
      <Caret className="ml-[7px]" />
      <Ic vb="0 0 24 24" className="ml-2 h-6 w-6">
        <rect x="1" y="1" width="22" height="17" fill="#eee" stroke="#555" strokeWidth="1.600" />
        <rect x="4.500" y="4" width="15" height="11" fill="#8db4e2" stroke="#2e5c98" strokeWidth="1.500" />
        <path d="M9 18V21H6V23H18V21H15V18" fill="#eee" stroke="#444" strokeWidth="1.300" />
      </Ic>
      <Caret className="ml-[3px]" />
      <Ic vb="0 0 24 24" className="ml-[10px] h-6 w-6">
        <rect x="1" y="1" width="22" height="22" fill="#fafafa" stroke="#444" strokeWidth="1.700" />
        <path d="M1 14H23V23H1Z" fill="#b9bfcc" />
        <path d="M5.400 1V23M9.800 1V23M14.200 1V23M18.600 1V23M1 5.400H23M1 9.800H23M1 14.200H23M1 18.600H23" stroke="#555" strokeWidth="1.200" />
      </Ic>
      <Caret className="ml-[3px]" />
      <Ic vb="0 0 24 20" className="-mt-0.5 ml-[9px] h-5 w-6">
        <path d="M1 1H11V9H1ZM13 1H23V9H13ZM1 11H11V19H1ZM13 11H23V19H13Z" fill="#9dc0e8" stroke="#2e4c78" strokeWidth="1.700" />
        <path d="M4 4H8M16 4H20M4 15H8M16 15H20" stroke="#6c94c6" strokeWidth="2" />
      </Ic>
      <Caret className="ml-[3px]" />
    </div>
  );
}

/* ---------- timeline ---------- */

const STEPS: Kind[] = [
  "sketch", "sketch", "cyl", "sketch", "sketch", "flange", "insert", "scale", "move", "joint", "move", "sketch", "combine",
  "extrude", "extrude", "derive", "sketch", "sketch", "extrude", "press", "move", "pattern", "combine", "combine", "sketch", "extrude", "extrude",
];

function Timeline() {
  return (
    <div className="flex h-[75px] border-t-[3px] border-[#cbcbcb] bg-[#f1f1f1]">
      <div className="flex w-[218px] shrink-0 items-start pt-[25.5px]">
        <Ic vb="0 0 20 22" className="ml-4 h-[22px] w-5"><path d="M0 0H3.500V22H0ZM19 1V21L4 11Z" fill="#444" /></Ic>
        <Ic vb="0 0 20 22" className="ml-[17px] h-[22px] w-5"><path d="M14 1V21L0 11ZM16 5H19V17H16Z" fill="#444" /></Ic>
        <Ic vb="0 0 18 24" className="-mt-px ml-[18px] h-6 w-[18px]"><path d="M0 0L18 12L0 24Z" fill="#444" /></Ic>
        <Ic vb="0 0 20 22" className="ml-[18px] h-[22px] w-5"><path d="M6 1V21L20 11ZM0 5H3V17H0Z" fill="#444" /></Ic>
        <Ic vb="0 0 20 22" className="ml-[18px] h-[22px] w-5"><path d="M1 1V21L15 11ZM15.500 0H19V22H15.500Z" fill="#444" /></Ic>
      </div>
      <div className="relative h-[72px] w-[960px] shrink-0">
        <div className="flex gap-3 pt-[23px]">
          {STEPS.map((k, i) => <Small key={i} kind={k} faded={i > 22} />)}
        </div>
        <svg viewBox="-1 0 960 72" className="absolute inset-0 h-[72px] w-[960px]" fill="none">
          <path d="M219 59.500H13.500V51M49.500 51V59M85.500 51V59M121.500 51V59M157.500 51V59M193 51V59" stroke="#ccc" strokeWidth="3" />
          <path d="M230 59.500H552.500V51M264 51V59M300 51V59M336 51V59M372 51V59M408 51V59M444 51V59M480 51V59M516 51V59" stroke="#999" strokeWidth="3" />
          <path d="M561 59.500H948V51M588 51V59M624 51V59M660 51V59M696 51V59M732 51V59M768 51V59M804 51V59M840 51V59M876 51V59M912 51V59" stroke="#ccc" strokeWidth="3" />
          <rect x="219" y="52.500" width="14" height="14" rx="3.500" fill="#c8ced8" stroke="#9aa0ac" strokeWidth="1.500" />
          <path d="M222 59.500H230" stroke="#222" strokeWidth="2" />
          <path d="M813 13H831V18L824 26V61H820V26L813 18Z" fill="#606060" />
        </svg>
      </div>
      <Small kind="gear" className="ml-auto mr-5 mt-6" />
    </div>
  );
}

/* ---------- taskbar ---------- */

function Slot({ className = "", active = false, children }: { className?: string; active?: boolean; children: ReactNode }) {
  return (
    <div className={"flex h-[60px] shrink-0 items-center justify-center " + (active ? "border-b-[3px] border-b-[#63b866] pt-[3px] " : "") + className}>{children}</div>
  );
}

function Taskbar() {
  return (
    <div className="flex h-[60px] bg-[#1c1c1c]">
      <Slot className="w-[72px]">
        <Ic vb="0 0 24 24" className="h-6 w-6"><path d="M0 3.500L9.500 2.200V11.500H0ZM11 2L24 0V11.500H11ZM0 12.500H9.500V21.800L0 20.500ZM11 12.500H24V24L11 22Z" fill="#fff" /></Ic>
      </Slot>
      <Slot className="w-[72px]">
        <Ic vb="0 0 24 24" className="h-6 w-6"><circle cx="15.300" cy="8.500" r="8" stroke="#fff" strokeWidth="1.500" /><path d="M9.500 14L0.500 23.500" stroke="#fff" strokeWidth="1.600" /></Ic>
      </Slot>
      <Slot className="w-[72px]">
        <Ic vb="0 0 24 24" className="h-6 w-6"><circle cx="12" cy="12" r="10" stroke="#fff" strokeWidth="3" /></Ic>
      </Slot>
      <Slot className="w-[72px]">
        <Ic vb="0 0 24 24" className="h-6 w-6">
          <path d="M0.700 0V4.500H16.300V0M0.700 24V19.500H16.300V24M0.700 7H16.300V17H0.700ZM22.500 0V4.500M22.500 12V24" stroke="#fff" strokeWidth="1.400" />
          <path d="M21 7.500H24V10.500H21Z" fill="#fff" />
        </Ic>
      </Slot>
      <Slot className="w-[80px]">
        <Ic vb="0 0 34 34" className="h-[34px] w-[34px]">
          <path d="M1 17Q1 26 12 27L26 22L10 14Z" fill="#8c8c8c" />
          <ellipse cx="16" cy="10.500" rx="15" ry="9" transform="rotate(-16 16 10.500)" fill="#f4f4f4" stroke="#d8342c" strokeWidth="2" />
          <path d="M6 14L24 6M14 2L19 21" stroke="#999" strokeWidth="1.800" />
          <path d="M19 18Q34 17 33 24Q29 28 22 21Q24 34 19 33Q14 30 20 20" stroke="#2a83d0" strokeWidth="2.600" />
        </Ic>
      </Slot>
      <Slot active className="w-[73px] border-r-[5px] border-r-[#3c3c3c] bg-[#4b4b4b] pl-1">
        <Ic vb="0 0 34 34" className="h-[34px] w-[34px]">
          <circle cx="17" cy="17" r="16.500" fill="#f9c93a" />
          <path d="M2.700 8.700A16.500 16.500 0 0 1 31.300 8.700H17L10 21Z" fill="#dd4b3e" />
          <path d="M2.700 8.700A16.500 16.500 0 0 0 17 33.500L24 21L17 24L10 21Z" fill="#1fa15c" />
          <circle cx="17" cy="17" r="7.600" fill="#fff" />
          <circle cx="17" cy="17" r="6" fill="#4584ee" />
        </Ic>
      </Slot>
      <Slot className="w-[75px]">
        <Ic vb="0 0 34 34" className="h-[34px] w-[34px]">
          <path d="M0 0H13L16 4H34V28H0Z" fill="#e9a620" />
          <path d="M0 7H14L17 4H34V32H0Z" fill="#fbd364" />
          <path d="M6 34V20Q6 17 9 17H25Q28 17 28 20V34H22V24H12V34Z" fill="#3b97dc" />
        </Ic>
      </Slot>
      <Slot className="w-[76px]">
        <Ic vb="0 0 34 34" className="h-[34px] w-[34px]">
          <circle cx="17" cy="17" r="16.500" fill="#7b56f0" />
          <path d="M33.500 15A16.500 16.500 0 0 1 10 32L18 22Z" fill="#fbc02d" />
          <path d="M14 33A16.500 16.500 0 0 1 4 6Q3 20 20 30Z" fill="#f47a20" />
          <path d="M17 7L26 9.500V15Q25 24 17 28Q9 24 8 15V9.500Z" fill="#fff" />
          <circle cx="17" cy="14.500" r="2.700" fill="#2b3350" /><path d="M16 15H18V21H16Z" fill="#2b3350" />
        </Ic>
      </Slot>
      <Slot className="w-[74px]">
        <Ic vb="0 0 36 36" className="h-9 w-9">
          <defs><linearGradient id="sq" x1="0" y1="1" x2="1" y2="0"><stop offset="0" stopColor="#1a38ff" /><stop offset="0.500" stopColor="#7a35a8" /><stop offset="1" stopColor="#ff2a2a" /></linearGradient></defs>
          <path d="M0 0H36V36H0Z" fill="url(#sq)" />
          <path d="M10 28V21Q7 18 7 15Q8 7.500 16 7.500Q25 8 25.500 16L28 22H25V27H14V23H18M13 22Q11 19 11.500 16Q13 12 17 12T21 16Q21 19 19 22V24" stroke="#fff" strokeWidth="1.900" />
        </Ic>
      </Slot>
      <Slot className="w-[76px]">
        <Ic vb="0 0 36 36" className="h-9 w-9">
          <rect width="36" height="36" rx="2" fill="#107c10" />
          <circle cx="18" cy="18" r="14" fill="#fff" />
          <path d="M8 6Q13 6 18 10.500Q23 6 28 6L29 8Q24 9 21 13Q28 19 30 27L27 30Q24 22 18 16Q12 22 9 30L6 27Q8 19 15 13Q12 9 7 8Z" fill="#107c10" />
        </Ic>
      </Slot>
      <Slot className="ml-[7px] w-[61px] pr-0.5" active>
        <Ic vb="0 0 36 36" className="h-9 w-9">
          <path d="M0 0H36V36H0Z" fill="#fbe3cb" stroke="#fff" />
          <path d="M13 3H27V9H18V14H25V19H18V27H11V6Z" fill="#e09a45" />
          <path d="M11 6L15 3L17 28H11ZM18 14L25 19H18Z" fill="#b96f22" />
          <text x="19" y="33.500" className="font-['Liberation_Sans',sans-serif] text-[7px] font-bold" fill="#e8903a">360</text>
        </Ic>
      </Slot>
      <Slot className="ml-[14px] w-[61px] pr-0.5" active>
        <Ic vb="0 0 36 36" className="h-9 w-9">
          <circle cx="18" cy="18" r="18" fill="#fff" />
          <path d="M9 23Q6 10 17 6Q25 4 27 9Z" fill="#333" />
          <path d="M27 12Q30 25 20 30Q12 32 9.500 27Z" fill="#f26b1d" />
        </Ic>
      </Slot>
      <div className="ml-auto flex flex-col items-center pr-[7px] pt-[3px] font-['Open_Sans',sans-serif] text-[17px] leading-[28px] text-white">
        <Fit w={65}>3:20 PM</Fit>
        <Fit w={92}>10/14/2021</Fit>
      </div>
    </div>
  );
}

export default function App() {
  return (
    <div className="flex h-[1080px] w-[1920px] flex-col overflow-hidden bg-white font-['Liberation_Sans',sans-serif]">
      <TitleBar />
      <DocBar />
      <Ribbon />
      <div className="relative h-[739px] shrink-0">
        <Scene />
        <div className="relative flex h-full flex-col">
          <Browser />
          <div className="mb-[5px] mt-auto flex items-center">
            <Comments />
            <NavBar />
          </div>
        </div>
      </div>
      <Timeline />
      <Taskbar />
    </div>
  );
}
